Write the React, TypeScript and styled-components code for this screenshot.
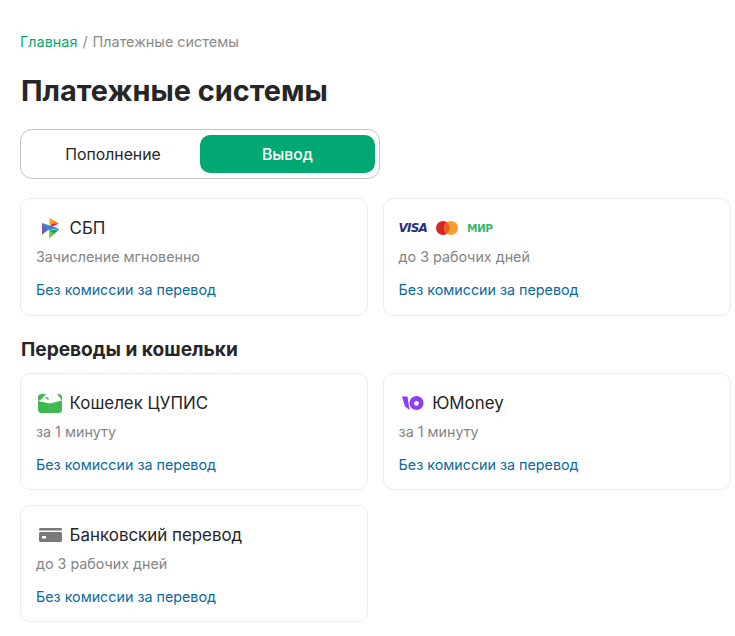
import React from "react";
import styled, { createGlobalStyle } from "styled-components";

const GlobalStyle = createGlobalStyle`
  html, body {
    margin: 0;
    padding: 0;
    background: #ffffff;
    font-family: Inter, "Noto Sans", sans-serif;
  }
`;

const Page = styled.div`
  width: 711px;
  padding: 34px 4px 14px 20px;
`;

const Breadcrumbs = styled.div`
  display: flex;
  gap: 5px;
  font-size: 14.4px;
  line-height: 16px;
  color: #8a8a8a;
`;

const Crumb = styled.a`
  color: #0aa86f;
  text-decoration: none;
`;

const Title = styled.h1`
  margin: 23px 0 0 1px;
  font-size: 28.9px;
  line-height: 36px;
  font-weight: 700;
  color: #262626;
`;

const Toggle = styled.div`
  box-sizing: border-box;
  display: grid;
  grid-template-columns: 1fr 175px;
  width: 360px;
  height: 50px;
  margin-top: 20px;
  padding: 5px 4px 5px 5px;
  border: 1px solid #c4c4c4;
  border-radius: 12px;
`;

const ToggleButton = styled.div<{ $active?: boolean }>`
  display: flex;
  align-items: center;
  justify-content: center;
  border-radius: 10px;
  font-size: 15.8px;
  font-weight: ${(p) => (p.$active ? 500 : 400)};
  color: ${(p) => (p.$active ? "#ffffff" : "#262626")};
  background: ${(p) => (p.$active ? "#02a874" : "transparent")};
`;

const Grid = styled.div`
  display: grid;
  grid-template-columns: 348px 1fr;
  column-gap: 14.6px;
  row-gap: 15px;
`;

const TopGrid = styled(Grid)`
  margin-top: 19px;
`;

const SectionTitle = styled.h2`
  margin: 22px 0 13px 1px;
  font-size: 19.1px;
  line-height: 22px;
  font-weight: 700;
  color: #262626;
`;

const Card = styled.div<{ $tall?: boolean }>`
  box-sizing: border-box;
  height: ${(p) => (p.$tall ? 118 : 117)}px;
  padding: 16px 15px 0;
  border: 1px solid #ececec;
  border-radius: 10px;
  background: #ffffff;
`;

const CardHead = styled.div`
  display: flex;
  align-items: center;
  gap: 7.6px;
  height: 26px;
  font-size: 16.9px;
  color: #262626;
`;

const IconSlot = styled.span`
  display: flex;
  align-items: center;
  justify-content: center;
  width: 26px;
  height: 26px;
`;

const Time = styled.div`
  margin-top: 7px;
  font-size: 14.3px;
  line-height: 18px;
  color: #858585;
`;

const Fee = styled.div`
  margin-top: 15px;
  font-size: 14.3px;
  line-height: 18px;
  color: #0b6a9c;
`;

const Logos = styled.div`
  display: flex;
  align-items: center;
  gap: 9px;
  height: 26px;
`;

const VisaMark = styled.span`
  font-family: "DejaVu Sans", sans-serif;
  font-size: 12px;
  font-weight: 700;
  font-style: italic;
  letter-spacing: -0.8px;
  color: #1f2f86;
`;

const MirMark = styled.span`
  font-family: "DejaVu Sans", sans-serif;
  font-size: 10.5px;
  font-weight: 700;
  letter-spacing: -0.5px;
  color: #3bb56c;
`;

const SbpIcon = () => (
  <svg width="20" height="20" viewBox="-3 0 20 20">
    <path d="M0 5 L8 10.5 L0 16.7Z" fill="#7b5bb0" />
    <path d="M0 5 L17 10.5 L5 12.5Z" fill="#2a8fd6" />
    <path d="M7.5 0 L12 5.5 L7.5 8.5Z" fill="#f7a11f" />
    <path d="M7.5 0 L17 5.5 L12 5.5Z" fill="#f58220" />
    <path d="M10.5 5.5 L17 5.5 L8 9.5Z" fill="#e8175d" />
    <path d="M7.5 12.5 L17.5 11 L7.5 20Z" fill="#1f9e57" />
    <path d="M7.5 12.5 L12 15.8 L7.5 20Z" fill="#7cc242" />
  </svg>
);

const McIcon = () => (
  <svg width="22" height="14" viewBox="0 0 22 14">
    <circle cx="7" cy="7" r="7" fill="#dc2626" />
    <circle cx="15" cy="7" r="7" fill="#f59e2e" />
    <path d="M11 1.4 A7 7 0 0 1 11 12.6 A7 7 0 0 1 11 1.4Z" fill="#e9602a" />
  </svg>
);

const WalletIcon = () => (
  <svg width="26" height="19" viewBox="-2 0 26 19">
    <rect x="0" y="0" width="24" height="19" rx="3.5" fill="#3fb950" />
    <path d="M2.5 6 L8 0 H19 L24 6.5 L12 9.5 L0 7Z" fill="#ffffff" />
    <path d="M7.5 3 h2 v1.2 h1.2 v1.6 h-1.6 v-1.2 h-1.6Z" fill="#3fb950" />
  </svg>
);

const YooIcon = () => (
  <svg width="26" height="15" viewBox="-3 0 26 15">
    <path d="M0 0.5 H5.5 L7.5 14 L3 10.5Z" fill="#8b3ffd" />
    <path d="M14.5 0 a7 7 0 1 0 0.01 0Z M14.5 5 a2.4 2.4 0 1 1 -0.01 0Z" fill="#8b3ffd" fillRule="evenodd" />
  </svg>
);

const BankIcon = () => (
  <svg width="26" height="14" viewBox="-3 0 26 14">
    <rect x="0" y="0" width="23" height="2.4" rx="1" fill="#7a7a7a" />
    <path d="M0 5.5 a1.5 1.5 0 0 1 1.5 -1.5 h20 a1.5 1.5 0 0 1 1.5 1.5 v7 a1.5 1.5 0 0 1 -1.5 1.5 h-20 a1.5 1.5 0 0 1 -1.5 -1.5Z" fill="#7a7a7a" />
    <rect x="3" y="8" width="4" height="2.5" fill="#ffffff" />
  </svg>
);

const FEE = "Без комиссии за перевод";

const PaymentCard = ({ icon, name, time, tall }: { icon: React.ReactNode; name: string; time: string; tall?: boolean }) => (
  <Card $tall={tall}>
    <CardHead>
      <IconSlot>{icon}</IconSlot>
      {name}
    </CardHead>
    <Time>{time}</Time>
    <Fee>{FEE}</Fee>
  </Card>
);

export default function App() {
  return (
    <>
      <GlobalStyle />
      <Page>
        <Breadcrumbs>
          <Crumb href="#">Главная</Crumb>
          <span>/</span>
          <span>Платежные системы</span>
        </Breadcrumbs>
        <Title>Платежные системы</Title>
        <Toggle>
          <ToggleButton>Пополнение</ToggleButton>
          <ToggleButton $active>Вывод</ToggleButton>
        </Toggle>
        <TopGrid>
          <PaymentCard tall icon={<SbpIcon />} name="СБП" time="Зачисление мгновенно" />
          <Card $tall>
            <Logos>
              <VisaMark>VISA</VisaMark>
              <McIcon />
              <MirMark>МИР</MirMark>
            </Logos>
            <Time>до 3 рабочих дней</Time>
            <Fee>{FEE}</Fee>
          </Card>
        </TopGrid>
        <SectionTitle>Переводы и кошельки</SectionTitle>
        <Grid>
          <PaymentCard icon={<WalletIcon />} name="Кошелек ЦУПИС" time="за 1 минуту" />
          <PaymentCard icon={<YooIcon />} name="ЮMoney" time="за 1 минуту" />
          <PaymentCard icon={<BankIcon />} name="Банковский перевод" time="до 3 рабочих дней" />
        </Grid>
      </Page>
    </>
  );
}
